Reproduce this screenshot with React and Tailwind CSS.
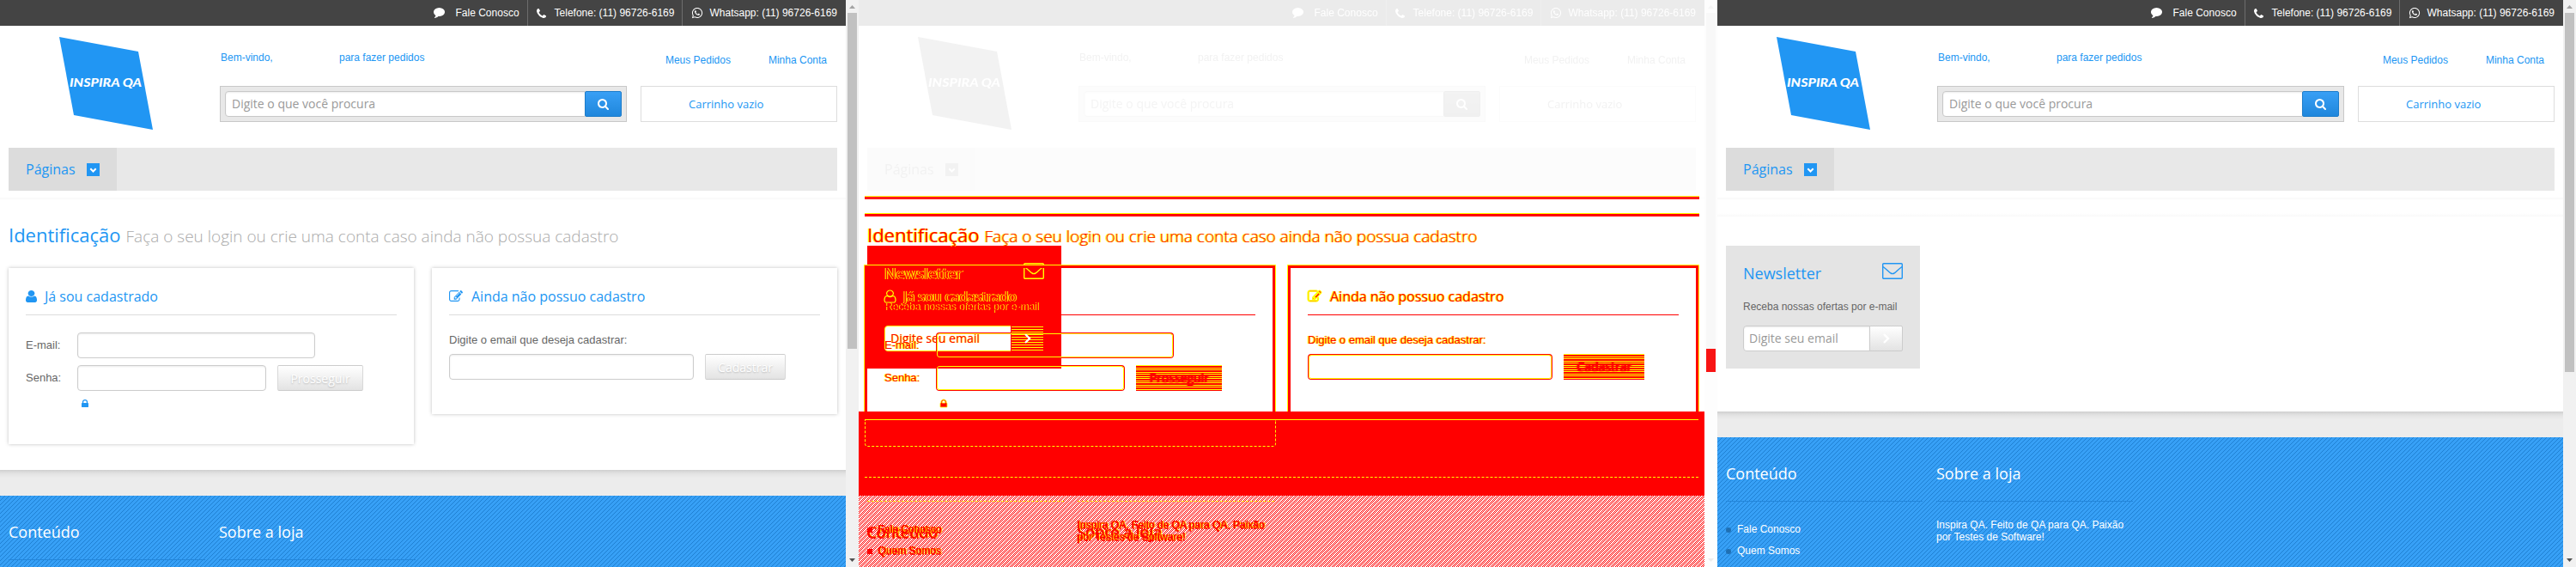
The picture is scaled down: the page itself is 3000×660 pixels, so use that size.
import React from "react";
import { FaWhatsapp } from "react-icons/fa";

const ICONS = {
  comment: ["0 256 1792 1536", "M1792 896q0 174-120 321.5t-326 233-450 85.5q-70 0-145-8-198 175-460 242-49 14-114 22h-5q-15 0-27-10.5t-16-27.5v-1q-3-4-.5-12t2-10 4.5-9.5l6-9 7-8.5 8-9q7-8 31-34.5t34.5-38 31-39.5 32.5-51 27-59 26-76q-157-89-247.5-220t-90.5-281q0-130 71-248.5t191-204.5 286-136.5 348-50.5 348 50.5 286 136.5 191 204.5 71 248.5z"],
  phone: ["192 128 1408 1408", "M1600 1240q0 27-10 70.5t-21 68.5q-21 50-122 106-94 51-186 51-27 0-53-3.5t-57.5-12.5-47-14.5-55.5-20.5-49-18q-98-35-175-83-127-79-264-216t-216-264q-48-77-83-175-3-9-18-49t-20.5-55.5-14.5-47-12.5-57.5-3.5-53q0-92 51-186 56-101 106-122 25-11 68.5-21t70.5-10q14 0 21 3 18 6 53 76 11 19 30 54t35 63.5 31 53.5q3 4 17.5 25t21.5 35.5 7 28.5q0 20-28.5 50t-62 55-62 53-28.5 46q0 9 5 22.5t8.5 20.5 14 24 11.5 19q76 137 174 235t235 174q2 1 19 11.5t24 14 20.5 8.5 22.5 5q18 0 46-28.5t53-62 55-62 50-28.5q14 0 28.5 7t35.5 21.5 25 17.5q25 15 53.5 31t63.5 35 54 30q70 35 76 53 3 7 3 21z"],
  search: ["64 128 1664 1664", "M1216 832q0-185-131.5-316.5t-316.5-131.5-316.5 131.5-131.5 316.5 131.5 316.5 316.5 131.5 316.5-131.5 131.5-316.5zm512 832q0 52-38 90t-90 38q-54 0-90-38l-343-342q-179 124-399 124-143 0-273.5-55.5t-225-150-150-225-55.5-273.5 55.5-273.5 150-225 225-150 273.5-55.5 273.5 55.5 225 150 150 225 55.5 273.5q0 220-124 399l343 343q37 37 37 90z"],
  user: ["256 128 1280 1536", "M1536 1399q0 109-62.5 187t-150.5 78h-854q-88 0-150.5-78t-62.5-187q0-85 8.5-160.5t31.5-152 58.5-131 94-89 134.5-34.5q131 128 313 128t313-128q76 0 134.5 34.5t94 89 58.5 131 31.5 152 8.5 160.5zm-256-887q0 159-112.5 271.5t-271.5 112.5-271.5-112.5-112.5-271.5 112.5-271.5 271.5-112.5 271.5 112.5 112.5 271.5z"],
  lock: ["320 128 1152 1408", "M640 768h512v-192q0-106-75-181t-181-75-181 75-75 181v192zm832 96v576q0 40-28 68t-68 28h-960q-40 0-68-28t-28-68v-576q0-40 28-68t68-28h32v-192q0-184 132-316t316-132 316 132 132 316v192h32q40 0 68 28t28 68z"],
  edit: ["0 128 1792 1408", "M888 1184l116-116-152-152-116 116v56h96v96h56zm440-720q-16-16-33 1l-350 350q-17 17-1 33t33-1l350-350q17-17 1-33zm80 594v190q0 119-84.5 203.5t-203.5 84.5h-832q-119 0-203.5-84.5t-84.5-203.5v-832q0-119 84.5-203.5t203.5-84.5h832q63 0 117 25 15 7 18 23 3 17-9 29l-49 49q-14 14-32 8-23-6-45-6h-832q-66 0-113 47t-47 113v832q0 66 47 113t113 47h832q66 0 113-47t47-113v-126q0-13 9-22l64-64q15-15 35-7t20 29zm-96-738l288 288-672 672h-288v-288zm444 132l-92 92-288-288 92-92q28-28 68-28t68 28l152 152q28 28 28 68t-28 68z"],
};

function Icon({ name, className = "" }) {
  const [box, d] = ICONS[name];
  return (
    <svg viewBox={box} preserveAspectRatio="none" className={`block shrink-0 overflow-visible ${className}`} fill="currentColor">
      <path d={d} />
    </svg>
  );
}

const SANS = "font-['Open_Sans',sans-serif]";

/* Colour sets: the live store page, and the highlighted comparison. */
const PAGE = {
  title: "text-[#2196f3]",
  sub: "text-[#aaa]",
  text: "text-[#666]",
  icon: "text-[#2196f3]",
  card: "shadow-[0_0_4px_rgba(0,0,0,0.25)]",
  cardTall: "shadow-[0_0_4px_rgba(0,0,0,0.25)]",
  rule: "bg-[#ddd]",
  input: "rounded-[4px] border border-[#ccc] bg-white shadow-[inset_0_1px_2px_rgba(0,0,0,0.08)]",
  button: "rounded-[2px] border border-[#ccc] border-x-[#d8d8d8] bg-linear-to-b from-white to-[#e3e3e3] text-white [text-shadow:0_1px_2px_rgba(0,0,0,0.22)]",
};
const DIFF = {
  title: "text-[#f00] [text-shadow:1px_0_#ff0,-1px_0_#ff0]",
  sub: "text-[#f00] [text-shadow:1px_0_#ff0,-1px_0_#ff0]",
  text: "text-[#f00] [text-shadow:1px_0_#ff0,-1px_0_#ff0]",
  icon: "text-[#f00] [stroke:#ff0] [stroke-width:120]",
  card: "outline-3 outline-[#f00] shadow-[0_0_0_4px_#ff0]",
  cardTall: "outline-3 outline-[#f00] shadow-[0_0_0_4px_#ff0]",
  rule: "bg-[#f00]",
  input: "rounded-[4px] border border-t-2 border-[#f00] outline outline-[#ff0] -outline-offset-2",
  button: "bg-[repeating-linear-gradient(#ff0_0_1px,#f00_1px_3px,#ff0_3px_4px,#f00_4px_5px)] text-[#f00] [text-shadow:0_0_2px_#f00,0_0_2px_#f00,1px_0_#f00]",
};

function Logo() {
  return (
    <svg viewBox="0 0 110 109" className="mt-[13px] ml-[69px] block h-[109px] w-[110px] shrink-0">
      <polygon points="0,0 92,17 109,108 17,91" fill="#2196f3" />
      <text x="12" y="58" textLength="84" lengthAdjust="spacingAndGlyphs" fill="#fff" className="font-['Lato',sans-serif] text-[14px] font-black italic">INSPIRA QA</text>
    </svg>
  );
}

function Header() {
  return (
    <div className="h-[232px] w-[985px] bg-white text-[12px] leading-4">
      <div className="flex h-[30px] items-center justify-end bg-[#444] text-white">
        <div className="flex h-full items-center pr-[9px]">
          <Icon name="comment" className="mr-[13px] h-[12px] w-[13px]" />
          Fale Conosco
        </div>
        <div className="flex h-full items-center border-l border-[#6d6d6d] pr-[9px] pl-[10px]">
          <Icon name="phone" className="mr-[10px] h-[11px] w-[11px]" />
          Telefone: (11) 96726-6169
        </div>
        <div className="flex h-full items-center border-l border-[#6d6d6d] pr-[10px] pl-[10px]">
          <FaWhatsapp className="mr-[7px] h-[14px] w-[14px]" />
          Whatsapp: (11) 96726-6169
        </div>
      </div>
      <div className="flex h-[142px] text-[#2196f3]">
        <div className="w-[256px] shrink-0"><Logo /></div>
        <div className="w-[474px]">
          <div className="flex h-[70px] pt-[29px] pl-px">
            <span className="w-[138px]">Bem-vindo,</span>
            <span>para fazer pedidos</span>
          </div>
          <div className="flex h-[42px] border border-[#c8c8c8] bg-[#e8e8e8] p-[5px]">
            <div className={`h-[30px] flex-1 rounded-l-[4px] border border-[#c8c8c8] bg-white pl-[7px] text-[14px] leading-[28px] text-[#999] shadow-[inset_0_1px_2px_rgba(0,0,0,0.08)] ${SANS}`}>
              Digite o que você procura
            </div>
            <div className="-ml-px flex h-[30px] w-[43px] items-center justify-center rounded-[2px] border border-[#1c7cca] bg-linear-to-b from-[#389ff5] to-[#1f87dc] text-white">
              <Icon name="search" className="mt-px h-[13px] w-[13px]" />
            </div>
          </div>
        </div>
        <div className="ml-4 w-[229px]">
          <div className="flex h-[70px] justify-end gap-[44px] pt-8 pr-[12px]">
            <span>Meus Pedidos</span>
            <span>Minha Conta</span>
          </div>
          <div className={`h-[42px] border border-[#ddd] pl-[55px] text-[13px] leading-[41px] ${SANS}`}>Carrinho vazio</div>
        </div>
      </div>
      <div className="mx-[10px] h-[50px] bg-[#e8e8e8]">
        <div className={`flex h-[50px] w-[126px] items-center bg-[#dcdcdc] pl-5 text-[16px] text-[#2196f3] ${SANS}`}>
          <span className="w-[71px]">Páginas</span>
          <svg viewBox="0 0 15 15" className="h-[15px] w-[15px]">
            <rect width="15" height="15" fill="#2196f3" />
            <path d="M4.3 6.3l3.2 3.2 3.2-3.2" fill="none" stroke="#fff" strokeWidth="2" />
          </svg>
        </div>
      </div>
      <div className="mt-[7px] h-[3px] bg-linear-to-b from-white to-[#f9f9f9]" />
    </div>
  );
}

function CardTitle({ t, icon, iconClass, gap, children }) {
  return (
    <div className="h-[55px]">
      <div className={`flex h-[54px] items-start pt-[23px] text-[16px] leading-5 ${t.title} ${SANS}`}>
        <span className={t.icon}><Icon name={icon} className={iconClass} /></span>
        <span className={gap}>{children}</span>
      </div>
      <div className={`h-px ${t.rule}`} />
    </div>
  );
}

function Login({ t }) {
  return (
    <div className="w-[985px] px-[10px]">
      <div className={`flex h-[80px] items-baseline pt-[26px] leading-[30px] ${SANS}`}>
        <span className={`text-[22px] ${t.title}`}>Identificação</span>
        <span className={`ml-[6px] text-[19px] font-light ${t.sub}`}>Faça o seu login ou crie uma conta caso ainda não possua cadastro</span>
      </div>
      <div className={`flex items-start justify-between text-[13px] leading-4 ${t.text}`}>
        <div className={`h-[205px] w-[472px] px-5 ${t.cardTall}`}>
          <CardTitle t={t} icon="user" iconClass="mt-[3px] h-[14px] w-[13px]" gap="ml-[9px]">Já sou cadastrado</CardTitle>
          <div className="mt-5 flex h-[30px] items-center">
            <span className="w-[60px]">E-mail:</span>
            <div className={`h-[30px] w-[277px] ${t.input}`} />
          </div>
          <div className="mt-2 flex h-[30px] items-center">
            <span className="w-[60px]">Senha:</span>
            <div className={`h-[30px] w-[220px] ${t.input}`} />
            <div className={`ml-[13px] h-[30px] w-[100px] text-center text-[14px] leading-[30px] ${t.button} ${SANS}`}>Prosseguir</div>
          </div>
          <span className={t.icon}><Icon name="lock" className="mt-[10px] ml-[65px] h-[9px] w-[8px]" /></span>
        </div>
        <div className={`h-[170px] w-[472px] px-5 ${t.card}`}>
          <CardTitle t={t} icon="edit" iconClass="mt-[3px] h-[13px] w-[16px]" gap="ml-[10px]">Ainda não possuo cadastro</CardTitle>
          <div className="mt-[21px]">Digite o email que deseja cadastrar:</div>
          <div className="mt-2 flex">
            <div className={`h-[30px] w-[285px] ${t.input}`} />
            <div className={`ml-[13px] h-[30px] w-[94px] text-center text-[14px] leading-[30px] ${t.button} ${SANS}`}>Cadastrar</div>
          </div>
        </div>
      </div>
    </div>
  );
}

function Newsletter({ diff }) {
  const title = diff ? "text-[#f00] [text-shadow:1px_0_#ff0,-1px_0_#ff0]" : "text-[#2196f3]";
  const text = diff ? "text-[#f00] [text-shadow:1px_0_#ff0]" : "text-[#666]";
  return (
    <div className={`ml-[10px] h-[143px] w-[226px] px-5 pt-5 ${diff ? "bg-[#f00]" : "bg-[#e4e4e4]"}`}>
      <div className={`flex h-[62px] justify-between ${title}`}>
        <span className={`text-[18px] leading-6 ${SANS}`}>Newsletter</span>
        <svg viewBox="0 0 24 19" className={`block h-[19px] w-6 ${diff ? "text-[#ff0]" : ""}`} fill="none" stroke="currentColor" strokeWidth="1.4">
          <rect x=".7" y=".7" width="22.6" height="17.6" rx="1" />
          <path d="M1 4.5C5 7.5 7 9.500 9.500 11.600Q12 13.600 14.500 11.600C17 9.500 19 7.500 23 4.500" />
        </svg>
      </div>
      <div className={`-mt-[19px] text-[12px] leading-4 ${text}`}>Receba nossas ofertas por e-mail</div>
      <div className={`mt-[14px] flex h-[30px] text-[14px] ${SANS}`}>
        <div className={`w-[148px] rounded-l-[4px] border pl-[6px] leading-[28px] ${diff ? "border-[#ff0] bg-white text-[#f00] [text-shadow:1px_0_#ff0]" : "border-[#ccc] bg-white text-[#999] shadow-[inset_0_1px_2px_rgba(0,0,0,0.08)]"}`}>
          Digite seu email
        </div>
        <div className={`-ml-px flex w-[39px] items-center justify-center border ${diff ? "border-[#f00] bg-[repeating-linear-gradient(#ff0_0_1px,#f00_1px_3px)]" : "rounded-r-[2px] border-[#ccc] bg-linear-to-b from-white to-[#e3e3e3]"}`}>
          <svg viewBox="0 0 8 12" className="h-3 w-2" fill="none" stroke="#fff" strokeWidth="2.4"><path d="M1 1l5 5-5 5" /></svg>
        </div>
      </div>
    </div>
  );
}

/* One-pixel diagonal hatch that repeats every five pixels. */
function Hatch({ id, color, offsets }) {
  return (
    <svg className="absolute inset-0 h-full w-full" shapeRendering="crispEdges">
      <pattern id={id} width="5" height="5" patternUnits="userSpaceOnUse">
        {offsets.flatMap((o) => [0, 1, 2, 3, 4].map((y) => (
          <rect key={`${o}-${y}`} x={(o + 5 - y) % 5} y={y} width="1" height="1" fill={color} />
        )))}
      </pattern>
      <rect width="100%" height="100%" fill={`url(#${id})`} />
    </svg>
  );
}

function Footer({ id, full }) {
  const links = ["Fale Conosco", "Quem Somos"];
  return (
    <div className="relative flex-1 overflow-hidden bg-[#37a0f6]">
      <Hatch id={id} color="#1f80d2" offsets={[0]} />
      <div className="relative flex gap-4 px-[10px] text-[12px] text-white">
        <div className="w-[229px]">
          <div className={`h-[75px] border-b border-[#2386da] pt-[30px] text-[18px] leading-6 ${SANS}`}>Conteúdo</div>
          {full && (
            <ul className="mt-[24px]">
              {links.map((l) => (
                <li key={l} className="flex h-[25px] items-start leading-4">
                  <span className="mt-[6px] mr-[7px] h-[6px] w-[6px] rounded-full bg-[#1f6fb2]" />
                  {l}
                </li>
              ))}
            </ul>
          )}
        </div>
        <div className="w-[229px]">
          <div className={`h-[75px] border-b border-[#2386da] pt-[30px] text-[18px] leading-6 ${SANS}`}>Sobre a loja</div>
          {full && <p className="mt-5 leading-[14px]">Inspira QA. Feito de QA para QA. Paixão por Testes de Software!</p>}
        </div>
      </div>
    </div>
  );
}

function Scrollbar({ thumb, up = "#a3a3a3" }) {
  return (
    <div className="flex h-[660px] w-[15px] flex-col items-center bg-[#f1f1f1]">
      <svg viewBox="0 0 15 15" className="h-[15px] w-[15px] shrink-0"><path d="M4 10h7L7.500 6z" fill={up} /></svg>
      <div className={`w-[11px] bg-[#c1c1c1] ${thumb}`} />
      <svg viewBox="0 0 15 15" className="mt-auto h-[15px] w-[15px] shrink-0"><path d="M4 5h7L7.500 9z" fill="#505050" /></svg>
    </div>
  );
}

const GAP = "h-[30px] shrink-0 bg-[linear-gradient(#cfcfcf,#e2e2e2_4px,#ececec_9px)]";

function LoginPage() {
  return (
    <div className="flex w-[1000px]">
      <div className="flex h-[660px] w-[985px] flex-col">
        <Header />
        <div className="h-[315px] shrink-0"><Login t={PAGE} /></div>
        <div className={GAP} />
        <Footer id="hatch-login" />
      </div>
      <Scrollbar thumb="h-[391px]" />
    </div>
  );
}

function NewsletterPage() {
  return (
    <div className="flex w-[1000px]">
      <div className="flex h-[660px] w-[985px] flex-col">
        <Header />
        <div className="h-[247px] shrink-0">
          <div className="h-[20px] bg-linear-to-b from-white from-80% to-[#f9f9f9]" />
          <div className="mt-[34px]"><Newsletter /></div>
        </div>
        <div className={GAP} />
        <Footer id="hatch-news" full />
      </div>
      <Scrollbar thumb="h-[418px]" />
    </div>
  );
}

const OVER = "col-start-1 row-start-1";
const NOISE = "text-[#f00] [text-shadow:1px_0_#ff0,-1px_0_#f00,0_1px_#f00]";

function Comparison() {
  return (
    <div className="grid h-[660px] w-[1000px] grid-cols-[1000px] grid-rows-[660px] overflow-hidden bg-white">
      <div className={`${OVER} flex opacity-10 grayscale`}>
        <Header />
        <Scrollbar thumb="h-[418px]" />
      </div>
      <div className={`${OVER} pt-[228px]`}>
        <div className="ml-[7px] h-1 w-[972px] border-t border-[#ff0] bg-[#f00]" />
        <div className="mt-4 ml-[7px] h-1 w-[972px] border-t border-[#ff0] bg-[#f00]" />
        <div className="mt-[34px]"><Newsletter diff /></div>
      </div>
      <div className={`${OVER} pt-[232px]`}><Login t={DIFF} /></div>
      <div className={`${OVER} flex flex-col pt-[479px]`}>
        <div className="h-[98px] w-[985px] shrink-0 bg-[#f00] px-[7px]">
          <div className="h-[9px]" />
          <div className="h-px bg-[#ff0]" />
          <div className="h-[31px] w-[479px] rounded-b-[4px] border border-t-0 border-dashed border-[#ff0]" />
          <div className="mt-[35px] border-t border-dashed border-[#ff0]" />
        </div>
        <div className="relative h-[83px] w-[985px] overflow-hidden">
          <Hatch id="hatch-diff" color="#f00" offsets={[0, 3]} />
          <div className="relative px-[10px] pt-[6px]">
            <div className="flex gap-4">
              <div className="w-[229px] border-t border-dashed border-[#ff0]" />
              <div className="w-[229px] border-t border-dashed border-[#ff0]" />
            </div>
            <div className={`flex text-[12px] ${NOISE}`}>
              <div className="grid w-[245px] grid-cols-[245px]">
                <div className={`${OVER} pt-[23px] text-[18px] leading-6 ${SANS}`}>Conteúdo</div>
                <ul className={`${OVER} pt-[24px]`}>
                  <li className="flex h-[25px] leading-4"><span className="mt-[6px] mr-[7px] h-[6px] w-[6px] bg-[#f00]" />Fale Conosco</li>
                  <li className="flex h-[25px] leading-4"><span className="mt-[6px] mr-[7px] h-[6px] w-[6px] bg-[#f00]" />Quem Somos</li>
                </ul>
              </div>
              <div className="grid w-[229px] grid-cols-[229px]">
                <div className={`${OVER} pt-[23px] text-[18px] leading-6 ${SANS}`}>Sobre a loja</div>
                <p className={`${OVER} pt-5 leading-[14px]`}>Inspira QA. Feito de QA para QA. Paixão por Testes de Software!</p>
              </div>
            </div>
          </div>
        </div>
      </div>
      <div className={`${OVER} pt-[406px] pl-[987px]`}>
        <div className="h-[27px] w-[11px] bg-[#f00]" />
      </div>
    </div>
  );
}

export default function App() {
  return (
    <div className="flex h-[660px] w-[3000px] overflow-hidden bg-white font-['Liberation_Sans',Arial,sans-serif]">
      <LoginPage />
      <Comparison />
      <NewsletterPage />
    </div>
  );
}
